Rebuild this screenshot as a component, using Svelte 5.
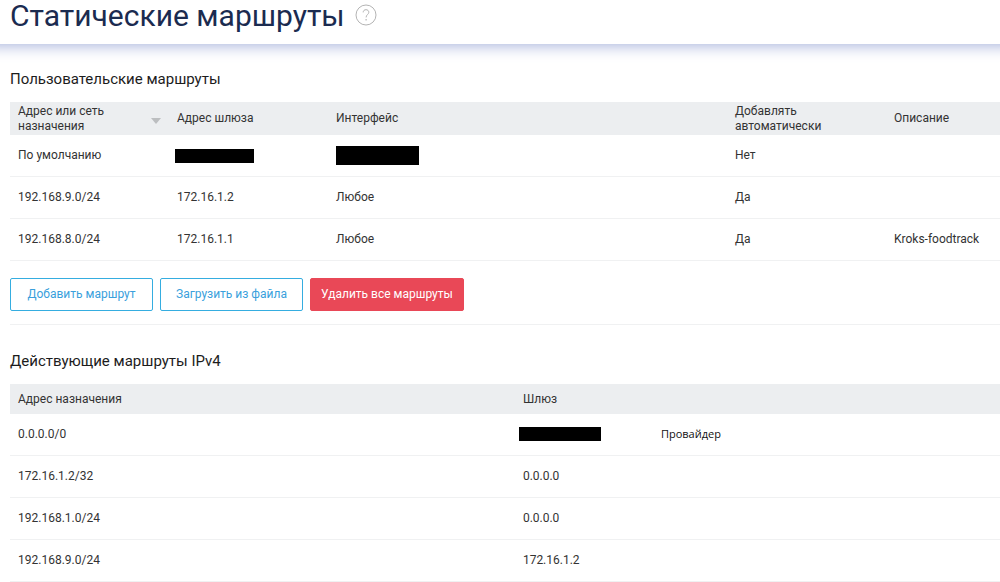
<script>
  const userRoutes = [
    { dest: 'По умолчанию', gateway: null, iface: null, auto: 'Нет', note: '' },
    { dest: '192.168.9.0/24', gateway: '172.16.1.2', iface: 'Любое', auto: 'Да', note: '' },
    { dest: '192.168.8.0/24', gateway: '172.16.1.1', iface: 'Любое', auto: 'Да', note: 'Kroks-foodtrack' },
  ];
  const activeRoutes = [
    { dest: '0.0.0.0/0', gateway: null, note: 'Провайдер' },
    { dest: '172.16.1.2/32', gateway: '0.0.0.0' },
    { dest: '192.168.1.0/24', gateway: '0.0.0.0' },
    { dest: '192.168.9.0/24', gateway: '172.16.1.2' },
  ];
</script>

<header>
  <h1>Статические маршруты</h1>
  <button class="help" aria-label="Справка">
    <svg width="22" height="22" viewBox="0 0 22 22" fill="none" stroke="#b4b4b4">
      <circle cx="11" cy="11" r="10" />
      <path d="M8.2 8.4C8.2 6.6 9.4 5.7 11 5.7s2.8 1 2.8 2.6c0 2.1-2.7 2.4-2.7 5.1" />
      <path d="M11.1 15v1.4" stroke-width="1.2" />
    </svg>
  </button>
</header>

<main>
  <section class="user">
    <h2>Пользовательские маршруты</h2>
    <table>
      <colgroup>
        <col class="std" /><col class="std" /><col /><col class="std" /><col class="note" />
      </colgroup>
      <thead>
        <tr class="tall">
          <th>
            <div class="sort">
              <span>Адрес или сеть назначения</span>
              <svg width="10" height="6" viewBox="0 0 10 6"><path d="M0 0h10L5 6z" fill="#bcbec0" /></svg>
            </div>
          </th>
          <th>Адрес шлюза</th>
          <th>Интерфейс</th>
          <th><div class="narrow">Добавлять автоматически</div></th>
          <th>Описание</th>
        </tr>
      </thead>
      <tbody>
        {#each userRoutes as r}
          <tr>
            <td>{r.dest}</td>
            <td>{#if r.gateway}{r.gateway}{:else}<span class="mask gateway"></span>{/if}</td>
            <td>{#if r.iface}{r.iface}{:else}<span class="mask iface"></span>{/if}</td>
            <td>{r.auto}</td>
            <td>{r.note}</td>
          </tr>
        {/each}
      </tbody>
    </table>
    <div class="actions">
      <button class="btn">Добавить маршрут</button>
      <button class="btn">Загрузить из файла</button>
      <button class="btn danger">Удалить все маршруты</button>
    </div>
  </section>

  <section>
    <h2>Действующие маршруты IPv4</h2>
    <table>
      <colgroup><col class="half" /><col /></colgroup>
      <thead>
        <tr><th>Адрес назначения</th><th>Шлюз</th></tr>
      </thead>
      <tbody>
        {#each activeRoutes as r}
          <tr>
            <td>{r.dest}</td>
            <td>
              {#if r.gateway}{r.gateway}{:else}
                <div class="provider"><span class="mask active"></span><span>{r.note}</span></div>
              {/if}
            </td>
          </tr>
        {/each}
      </tbody>
    </table>
  </section>
</main>

<style>
  :global(body) {
    background: #fff;
    color: #333;
    font-family: Roboto, sans-serif;
    font-size: 12px;
    line-height: 15px;
    overflow-x: hidden;
  }
  header {
    display: flex;
    align-items: center;
    gap: 10px;
    height: 44px;
    margin: 0 -16px;
    padding: 0 26px;
    box-sizing: border-box;
    box-shadow: 0 0 16px 1px #9eabd8;
  }
  h1 {
    margin: 0;
    padding-bottom: 12px;
    font-size: 30px;
    line-height: 32px;
    font-weight: 400;
    color: #1b2b50;
  }
  .help {
    padding: 0 0 14px;
    border: 0;
    background: none;
  }
  .help svg {
    display: block;
  }
  main {
    padding-left: 10px;
  }
  section {
    padding-top: 24px;
  }
  .user {
    border-bottom: 1px solid #f0f1f2;
  }
  .user + section {
    padding-top: 25px;
  }
  h2 {
    margin: 0 0 12px;
    font-size: 15px;
    line-height: 22px;
    font-weight: 400;
    color: #1c1c1c;
  }
  table {
    width: 100%;
    border-collapse: separate;
    border-spacing: 0;
    table-layout: fixed;
  }
  .std { width: 159px; }
  .note { width: 114px; }
  .half { width: 51%; }
  th {
    height: 30px;
    padding: 0 8px;
    background: #eceef0;
    font-weight: 400;
    text-align: left;
  }
  .tall th {
    height: 33px;
  }
  td {
    height: 41px;
    padding: 0 8px;
    border-bottom: 1px solid #f0f1f2;
  }
  .sort {
    display: flex;
    align-items: center;
    justify-content: space-between;
  }
  .sort span,
  .narrow {
    max-width: 100px;
  }
  .sort svg {
    margin-top: 4px;
  }
  .mask {
    display: block;
    background: #000;
  }
  .gateway {
    width: 79px;
    height: 14px;
    margin-left: -2px;
  }
  .iface {
    width: 83px;
    height: 19px;
  }
  .active {
    width: 82px;
    height: 14px;
  }
  .provider {
    display: flex;
    align-items: center;
    gap: 60px;
    margin-left: -4px;
    padding-bottom: 2px;
    font-family: "Open Sans", sans-serif;
    font-size: 11px;
    color: #111;
  }
  .actions {
    display: flex;
    gap: 7px;
    padding: 17px 0 13px;
  }
  .btn {
    min-width: 143px;
    height: 33px;
    padding: 0 10px;
    border: 1px solid #35ade0;
    border-radius: 2px;
    background: #fff;
    color: #3a9fdc;
    font: inherit;
  }
  .danger {
    min-width: 154px;
    border-color: #e94857;
    background: #e94857;
    color: #fff;
  }
</style>
